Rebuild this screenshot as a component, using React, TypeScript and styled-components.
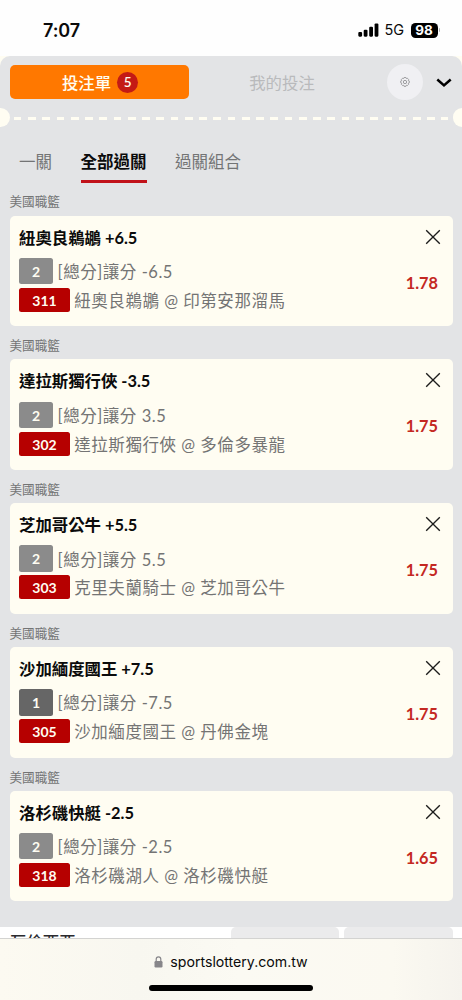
import React from 'react';
import styled, { createGlobalStyle } from 'styled-components';

const Global = createGlobalStyle`
  * { box-sizing: border-box; }
  body {
    margin: 0;
    background: #fefefe;
    font-family: Lato, "Noto Sans CJK TC", sans-serif;
    color: #0b0b0b;
  }
`;

const Screen = styled.div`
  width: 462px;
  height: 1000px;
  overflow: hidden;
  display: flex;
  flex-direction: column;
`;

const StatusBar = styled.header`
  flex: none;
  height: 56px;
  padding: 4px 22px 0 43px;
  display: flex;
  align-items: center;
  justify-content: space-between;
  font-family: Inter, sans-serif;
`;

const Clock = styled.time`
  font-size: 18px;
  font-weight: 600;
  letter-spacing: -0.1px;
`;

const StatusIcons = styled.div`
  display: flex;
  align-items: center;
`;

const Network = styled.span`
  margin-left: 6px;
  width: 26px;
  font-size: 14.5px;
  line-height: 16px;
  letter-spacing: 0;
`;

const Battery = styled.span`
  width: 27px;
  height: 15px;
  border-radius: 4.5px;
  background: #000;
  color: #fff;
  font-size: 13.5px;
  font-weight: 700;
  line-height: 15px;
  text-align: center;
`;

const BatteryTip = styled.span`
  width: 1.5px;
  height: 4px;
  margin-left: 1px;
  border-radius: 0 2px 2px 0;
  background: #b5b5b5;
`;

const SlipBackdrop = styled.div`
  flex: none;
  height: 871px;
  background: linear-gradient(#fffdf2 0 30px, #e3e4e6 30px);
`;

const Slip = styled.main`
  height: 871px;
  border-radius: 10px 10px 0 0;
  background: #e3e4e6;
  display: flex;
  flex-direction: column;
  overflow: hidden;
`;

const SlipHeader = styled.div`
  height: 52px;
  padding: 0 10px 0 9.5px;
  display: flex;
  align-items: center;
`;

const SlipButton = styled.button<{ $active?: boolean }>`
  width: ${(p) => (p.$active ? '179.5px' : '184.5px')};
  height: 33.5px;
  padding: 0 0 0 1.5px;
  border: 0;
  border-radius: 5px;
  display: flex;
  align-items: center;
  justify-content: center;
  gap: 6px;
  background: ${(p) => (p.$active ? '#ff7800' : 'transparent')};
  color: ${(p) => (p.$active ? '#fffdf2' : '#b9babc')};
  font: 16.4px Lato, "Noto Sans CJK TC", sans-serif;
  font-weight: ${(p) => (p.$active ? 500 : 400)};
`;

const Count = styled.span`
  width: 21px;
  height: 21px;
  border-radius: 50%;
  background: #c41a15;
  font-size: 13.5px;
  font-weight: 600;
  line-height: 21px;
  text-align: center;
`;

const Settings = styled.button`
  width: 36px;
  height: 36px;
  margin-left: 13.5px;
  padding: 0;
  border: 0;
  border-radius: 50%;
  background: #f0f0f3;
  display: grid;
  place-items: center;
`;

const Collapse = styled.button`
  width: 16px;
  height: 20px;
  margin-left: 12.5px;
  padding: 1px 0 0;
  border: 0;
  background: none;
  display: grid;
  place-items: center;
`;

const Perforation = styled.div`
  height: 19px;
  display: flex;
  align-items: center;
  justify-content: space-between;
`;

const Notch = styled.span<{ $side: 'left' | 'right' }>`
  flex: none;
  width: 9.5px;
  height: 19px;
  background: #fffdf2;
  border-radius: ${(p) => (p.$side === 'left' ? '0 10px 10px 0' : '10px 0 0 10px')};
`;

const Dashes = styled.span`
  width: 434.5px;
  height: 3px;
  margin-top: 2px;
  background: repeating-linear-gradient(90deg, #fffdf2 0 7.5px, transparent 7.5px 14.25px);
`;

const Tabs = styled.nav`
  height: 55.2px;
  padding: 23px 0 0 19px;
  display: flex;
  gap: 28.5px;
`;

const Tab = styled.a<{ $active?: boolean }>`
  height: 32.7px;
  border-bottom: 3.4px solid ${(p) => (p.$active ? '#c1121a' : 'transparent')};
  color: ${(p) => (p.$active ? '#0b0b0b' : '#737475')};
  font-size: 16.5px;
  font-weight: ${(p) => (p.$active ? 700 : 400)};
  line-height: 25px;
`;

const Bet = styled.section`
  flex: none;
  height: 143.85px;
`;

const League = styled.h3`
  margin: 0;
  height: 33.4px;
  padding: 11px 0 0 9.5px;
  color: #737475;
  font-size: 12.6px;
  font-weight: 400;
  line-height: 18px;
`;

const Card = styled.article`
  height: 110.4px;
  margin: 0 9.5px;
  padding: 9px 12px 0 9.5px;
  border-radius: 5px;
  background: #fffdf2;
  display: flex;
  justify-content: space-between;
`;

const Details = styled.div`
  display: flex;
  flex-direction: column;
`;

const Pick = styled.h2`
  margin: 0 0 7px;
  height: 26px;
  font-size: 16.4px;
  font-weight: 700;
  line-height: 26.5px;
  white-space: nowrap;
`;

const Line = styled.div<{ $last?: boolean }>`
  height: ${(p) => (p.$last ? '24px' : '26.5px')};
  margin-bottom: 3.7px;
  display: flex;
  align-items: center;
  gap: 4.3px;
  color: #747474;
  font-size: 16.5px;
  letter-spacing: 0.53px;
  white-space: nowrap;
`;

const Tag = styled.span<{ $tone: 'light' | 'dark' | 'red' }>`
  width: ${(p) => (p.$tone === 'red' ? '51px' : '34.3px')};
  height: ${(p) => (p.$tone === 'red' ? '24px' : '26.3px')};
  border-radius: 2.5px;
  background: ${(p) => ({ light: '#8b8b8b', dark: '#666666', red: '#b60000' })[p.$tone]};
  color: #fffdf2;
  font-size: 14px;
  font-weight: 700;
  letter-spacing: 0;
  line-height: ${(p) => (p.$tone === 'red' ? '25px' : '27.3px')};
  text-align: center;
`;

const Side = styled.div`
  padding-top: 4px;
  display: flex;
  flex-direction: column;
  align-items: flex-end;
`;

const Odds = styled.strong`
  margin: 26px 2.500px 0 0;
  color: #c42822;
  font-size: 16.3px;
  line-height: 24px;
`;

const Results = styled.div`
  flex: none;
  height: 11px;
  overflow: hidden;
  background: #fff;
  padding: 0 9.5px 0 10px;
  display: flex;
  gap: 5px;
`;

const Team = styled.span`
  flex: 1;
  padding-top: 3px;
  color: #2a2a2e;
  font-size: 16.4px;
  font-weight: 500;
  line-height: 23px;
`;

const OddsCell = styled.span`
  width: 108.5px;
  height: 40px;
  border-radius: 5px;
  background: #ebebec;
`;

const BrowserBar = styled.footer`
  flex: 1;
  border-top: 1px solid #d3d3d1;
  background: linear-gradient(90deg, #fcfaf1 0%, #f8f7f0 30%, #fbfaf3 52%, #fbf9f1 85%, #f5f3ed 100%);
  display: flex;
  flex-direction: column;
  align-items: center;
  font-family: Inter, sans-serif;
`;

const Address = styled.div`
  height: 45.5px;
  display: flex;
  align-items: center;
  gap: 7px;
  font-size: 14.15px;
`;

const HomeIndicator = styled.span`
  width: 164.5px;
  height: 6px;
  border-radius: 3px;
  background: #000;
`;

const bets = [
  { pick: '紐奧良鵜鶘 +6.5', count: 2, market: '[總分]讓分 -6.5', code: 311, match: '紐奧良鵜鶘 @ 印第安那溜馬', odds: '1.78' },
  { pick: '達拉斯獨行俠 -3.5', count: 2, market: '[總分]讓分 3.5', code: 302, match: '達拉斯獨行俠 @ 多倫多暴龍', odds: '1.75' },
  { pick: '芝加哥公牛 +5.5', count: 2, market: '[總分]讓分 5.5', code: 303, match: '克里夫蘭騎士 @ 芝加哥公牛', odds: '1.75' },
  { pick: '沙加緬度國王 +7.5', count: 1, market: '[總分]讓分 -7.5', code: 305, match: '沙加緬度國王 @ 丹佛金塊', odds: '1.75' },
  { pick: '洛杉磯快艇 -2.5', count: 2, market: '[總分]讓分 -2.5', code: 318, match: '洛杉磯湖人 @ 洛杉磯快艇', odds: '1.65' },
];

const SignalIcon = () => (
  <svg width="21" height="14" viewBox="0 0 21 14">
    <rect x="0.3" y="9" width="3.8" height="4.7" rx="1.1" />
    <rect x="5.7" y="6.7" width="3.8" height="7" rx="1.1" />
    <rect x="11.2" y="3.7" width="3.8" height="10" rx="1.1" />
    <rect x="16.6" y="0.4" width="3.8" height="13.3" rx="1.1" />
  </svg>
);

const GearIcon = () => (
  <svg width="10" height="10" viewBox="0 0 20 20" fill="none" stroke="#949496" strokeWidth="1.8" strokeLinejoin="round">
    <path d="M8.2 1h3.6l.8 2 2.1-.6 2.5 2.5-.7 2.1 2 .9v3.8l-2 .8.7 2.2-2.5 2.4-2.1-.6-.8 2.2H8.2l-.8-2.2-2.1.6-2.5-2.4.7-2.2-2-.8V7.9l2-.9-.7-2.1 2.5-2.5 2.1.6z" />
    <circle cx="10" cy="10" r="3.3" />
  </svg>
);

const ChevronIcon = () => (
  <svg width="16" height="10" viewBox="0 0 16 10" fill="none" stroke="#000" strokeWidth="2.5">
    <path d="M1.3 1.5L8 7.4l6.7-5.9" />
  </svg>
);

const CloseIcon = () => (
  <svg width="16" height="16" viewBox="0 0 16 16" fill="none" stroke="#1c1c1c" strokeWidth="1.35">
    <path d="M1.2 1.2l13.6 13.6M14.8 1.2L1.2 14.8" />
  </svg>
);

const LockIcon = () => (
  <svg width="9" height="12" viewBox="0 0 9 12">
    <rect x="0.5" y="5" width="8" height="6.5" rx="1.2" fill="#87868a" />
    <path d="M2.2 5.5V3.2a2.3 2.3 0 0 1 4.6 0v2.3" fill="none" stroke="#87868a" strokeWidth="1.2" />
  </svg>
);

export default function App() {
  return (
    <Screen>
      <Global />
      <StatusBar>
        <Clock>7:07</Clock>
        <StatusIcons>
          <SignalIcon />
          <Network>5G</Network>
          <Battery>98</Battery>
          <BatteryTip />
        </StatusIcons>
      </StatusBar>
      <SlipBackdrop>
        <Slip>
          <SlipHeader>
            <SlipButton $active>
              投注單<Count>5</Count>
            </SlipButton>
            <SlipButton>我的投注</SlipButton>
            <Settings aria-label="設定"><GearIcon /></Settings>
            <Collapse aria-label="收合"><ChevronIcon /></Collapse>
          </SlipHeader>
          <Perforation>
            <Notch $side="left" />
            <Dashes />
            <Notch $side="right" />
          </Perforation>
          <Tabs>
            <Tab>一關</Tab>
            <Tab $active>全部過關</Tab>
            <Tab>過關組合</Tab>
          </Tabs>
          {bets.map((bet) => (
            <Bet key={bet.code}>
              <League>美國職籃</League>
              <Card>
                <Details>
                  <Pick>{bet.pick}</Pick>
                  <Line>
                    <Tag $tone={bet.count === 1 ? 'dark' : 'light'}>{bet.count}</Tag>
                    {bet.market}
                  </Line>
                  <Line $last>
                    <Tag $tone="red">{bet.code}</Tag>
                    {bet.match}
                  </Line>
                </Details>
                <Side>
                  <CloseIcon />
                  <Odds>{bet.odds}</Odds>
                </Side>
              </Card>
            </Bet>
          ))}
        </Slip>
      </SlipBackdrop>
      <Results>
        <Team>瓦倫西亞</Team>
        <OddsCell />
        <OddsCell />
      </Results>
      <BrowserBar>
        <Address>
          <LockIcon />
          sportslottery.com.tw
        </Address>
        <HomeIndicator />
      </BrowserBar>
    </Screen>
  );
}
